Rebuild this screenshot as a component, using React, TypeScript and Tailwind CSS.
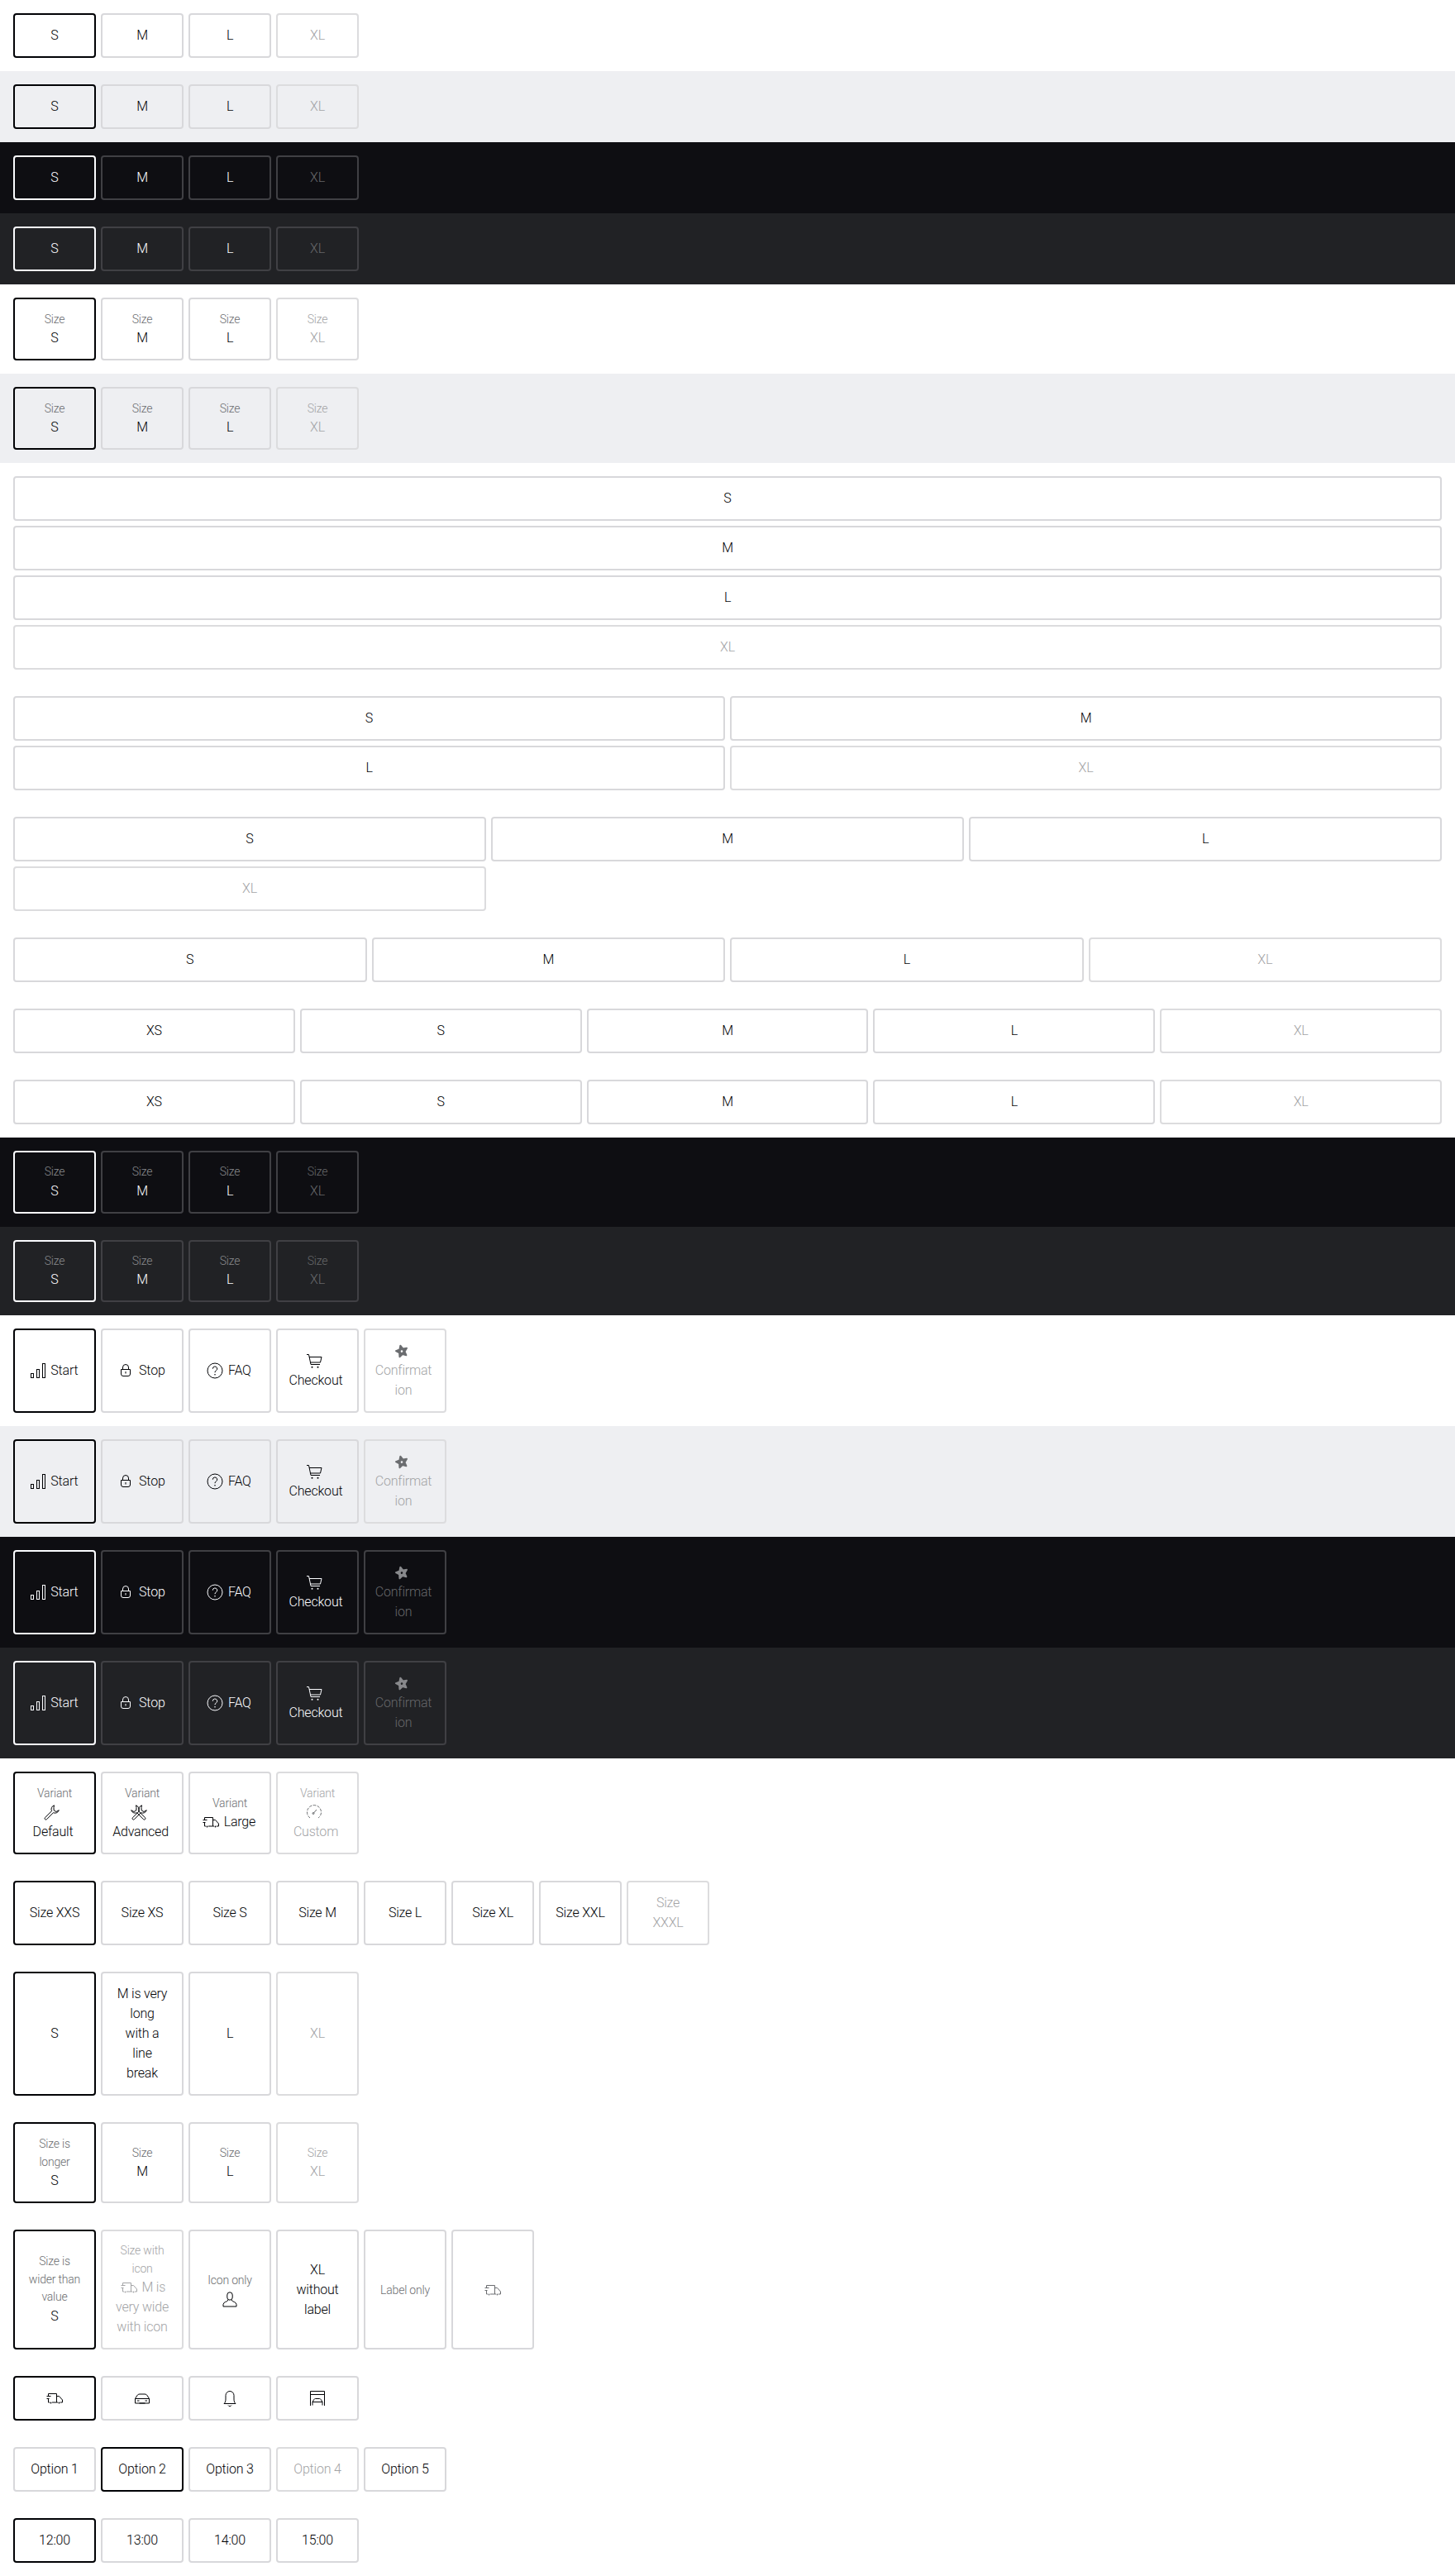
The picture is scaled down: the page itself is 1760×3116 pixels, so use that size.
import React from 'react';

type Theme = 'light' | 'surface' | 'dark' | 'darkSurface';

const sectionBg: Record<Theme, string> = {
  light: 'bg-white',
  surface: 'bg-[#eeeff2]',
  dark: 'bg-[#0e0e12]',
  darkSurface: 'bg-[#212225]',
};

const isDark = (t: Theme) => t === 'dark' || t === 'darkSurface';

const Svg: React.FC<{ children: React.ReactNode; className?: string }> = ({ children, className }) => (
  <svg viewBox="0 0 24 24" fill="none" stroke="currentColor" strokeWidth={1} className={`inline-block w-6 h-6 align-top ${className ?? ''}`}>
    {children}
  </svg>
);

const BarsIcon = () => (
  <Svg>
    <rect x="3.5" y="15.5" width="3" height="5" />
    <rect x="10.5" y="10.5" width="3" height="10" />
    <rect x="17.5" y="3.5" width="3" height="17" />
  </Svg>
);
const LockIcon = () => (
  <Svg>
    <path d="M6.5 10.5h11v5.5a2.5 2.5 0 0 1-2.500 2.500h-6a2.500 2.500 0 0 1-2.500-2.500z" />
    <path d="M8.500 10.500V8a3.500 3.500 0 0 1 7 0v2.500M12 13v2.500" />
  </Svg>
);
const QuestionIcon = () => (
  <Svg>
    <circle cx="12" cy="12" r="9" />
    <path d="M9.300 9.700a2.700 2.700 0 1 1 3.900 2.400c-.8.400-1.200 1-1.200 2.100" />
    <circle cx="12" cy="16.800" r=".8" fill="currentColor" stroke="none" />
  </Svg>
);
const CartIcon = () => (
  <Svg>
    <path d="M3 4.500h2.500L8 16.500h11" />
    <path d="M6 7.500h15l-1.500 6.500H7.500" />
    <circle cx="9.500" cy="19.800" r="1" fill="currentColor" stroke="none" />
    <circle cx="16.500" cy="19.800" r="1" fill="currentColor" stroke="none" />
  </Svg>
);
const StarIcon = () => (
  <Svg>
    <g transform="rotate(-14 12 12.500)">
      <path
        fillRule="evenodd"
        fill="currentColor"
        strokeWidth={2}
        strokeLinejoin="round"
        d="M12 5.500l2 4.300 4.700.6-3.400 3.300.8 4.700-4.100-2.300-4.100 2.300.8-4.700-3.400-3.300 4.700-.6zM12 10.300a2.300 2.300 0 1 0 0 4.600 2.300 2.300 0 0 0 0-4.600z"
      />
    </g>
  </Svg>
);
const wrenchPath =
  'M15.500 3.800a5 5 0 0 0-3 6.900l-8 8a1.400 1.400 0 0 0 2 2l8-8a5 5 0 0 0 6.800-3l-3.300 1.800-2.800-1.600-.2-3.200z';
const WrenchIcon = () => (
  <Svg>
    <path d={wrenchPath} />
  </Svg>
);
const ToolsIcon = () => (
  <Svg>
    <path d={wrenchPath} />
    <path d={wrenchPath} transform="matrix(-1 0 0 1 24 0)" />
  </Svg>
);
const TruckIcon = () => (
  <Svg>
    <path d="M4.500 9V6.500h10v10.500H9M4.500 13v4H6" />
    <path d="M2.500 9.500h5M2.500 12.500h3" />
    <path d="M14.500 9.500h3l4 4.500v3H19M14.500 17H16" />
    <circle cx="7.500" cy="17.500" r=".9" fill="currentColor" stroke="none" />
    <circle cx="17.500" cy="17.500" r=".9" fill="currentColor" stroke="none" />
  </Svg>
);
const GaugeIcon = () => (
  <Svg>
    <path d="M7 19a8.500 8.500 0 1 1 10 0" strokeDasharray="3.500 1.500" />
    <path d="M11 13.500l4-4.500" />
    <circle cx="11" cy="13.500" r="1" />
  </Svg>
);
const UserIcon = () => (
  <Svg>
    <path d="M8.800 7a3.200 3.200 0 0 1 6.400 0v3a3.200 3.200 0 0 1-6.400 0z" />
    <path d="M9.500 13v1c0 .8-5.500 1.500-5.500 4.500v2.500h16v-2.500c0-3-5.500-3.700-5.500-4.500v-1" />
  </Svg>
);
const CarIcon = () => (
  <Svg>
    <path d="M3.500 12.500l2.300-3.700c.6-1 1.700-1.800 3.200-1.800h6c1.500 0 2.600.8 3.200 1.800l2.300 3.700V18h-17z" />
    <path d="M3.500 12.500h17M6 15h2.500M15.500 15H18M8.500 18h7" />
  </Svg>
);
const BellIcon = () => (
  <Svg>
    <path d="M5 18.500h14c-1.500-1.500-2-3-2-5.500V8.500a5 5 0 0 0-10 0V13c0 2.500-.5 4-2 5.500z" />
    <path d="M10 20.500a2.300 2.300 0 0 0 4 0" />
  </Svg>
);
const GarageIcon = () => (
  <Svg>
    <path d="M3.500 21V3.500h17V21M3.500 7.500h17" />
    <path d="M6 20.500v-4l1.800-3c.4-.6 1-1 1.700-1h5c.7 0 1.300.4 1.700 1l1.800 3v4M6 16.500h12" />
  </Svg>
);

interface CardProps {
  theme?: Theme;
  label?: React.ReactNode;
  value?: React.ReactNode;
  selected?: boolean;
  disabled?: boolean;
  className?: string;
  labelClass?: string;
}

const Card: React.FC<CardProps> = ({ theme = 'light', label, value, selected, disabled, className, labelClass }) => {
  const dark = isDark(theme);
  const border = selected
    ? dark
      ? 'border-[#fbfcff]'
      : 'border-[#010205]'
    : dark
      ? 'border-[#404044]'
      : disabled
        ? 'border-[#dcdcde]'
        : 'border-[#d8d8db]';
  const valueColor = disabled ? (dark ? 'text-[#66676a]' : 'text-[#a3a4a6]') : dark ? 'text-[#fbfcff]' : 'text-[#010205]';
  const labelColor = disabled ? (dark ? 'text-[#66676a]' : 'text-[#a3a4a6]') : dark ? 'text-[#88898c]' : 'text-[#6b6d70]';
  return (
    <div
      className={`flex flex-col items-center justify-center border-2 rounded px-[13px] py-[13px] text-center font-[350] tracking-[-0.2px] font-['Roboto',sans-serif] whitespace-pre-line ${border} ${className ?? 'w-[100px]'}`}
    >
      {label && <div className={`text-[14px] ${labelClass ?? 'leading-[22px]'} ${labelColor}`}>{label}</div>}
      {value && <div className={`text-base leading-6 ${valueColor}`}>{value}</div>}
    </div>
  );
};

// icon sitting next to the text on the same line
const Inline: React.FC<{ icon: React.ReactNode; text: string }> = ({ icon, text }) => (
  <span className="inline-block pr-1 whitespace-nowrap">
    {icon} {text}
  </span>
);

// icon on its own line, text below
const Stacked: React.FC<{ icon: React.ReactNode; text: string; iconClass?: string }> = ({ icon, text, iconClass }) => (
  <>
    <span className={`flex justify-center pr-2 ${iconClass ?? ''}`}>{icon}</span>
    <span className="block pr-1">{text}</span>
  </>
);

const SIZES = ['S', 'M', 'L', 'XL'];

const Section: React.FC<{ theme: Theme; children: React.ReactNode }> = ({ theme, children }) => (
  <div className={`p-4 ${sectionBg[theme]}`}>
    <div className="flex gap-[6px] items-stretch">{children}</div>
  </div>
);

const SizeRow: React.FC<{ theme: Theme; withLabel?: boolean; labelClass?: string }> = ({ theme, withLabel, labelClass }) => (
  <Section theme={theme}>
    {SIZES.map((s, i) => (
      <Card key={s} theme={theme} value={s} label={withLabel ? 'Size' : undefined} selected={i === 0} disabled={s === 'XL'} labelClass={labelClass} />
    ))}
  </Section>
);

const IconRow: React.FC<{ theme: Theme }> = ({ theme }) => {
  const star = isDark(theme) ? 'text-[#88898c]' : 'text-[#6b6d70]';
  return (
    <Section theme={theme}>
      <Card theme={theme} selected value={<Inline icon={<BarsIcon />} text="Start" />} />
      <Card theme={theme} value={<Inline icon={<LockIcon />} text="Stop" />} />
      <Card theme={theme} value={<Inline icon={<QuestionIcon />} text="FAQ" />} />
      <Card theme={theme} value={<Stacked icon={<CartIcon />} text="Checkout" />} />
      <Card theme={theme} disabled value={<Stacked icon={<StarIcon />} iconClass={star} text={'Confirmat\nion'} />} />
    </Section>
  );
};

const GridRow: React.FC<{ cols: string; items: string[] }> = ({ cols, items }) => (
  <div className={`grid gap-[6px] ${cols}`}>
    {items.map((s) => (
      <Card key={s} value={s} selected={false} disabled={s === 'XL'} className="w-full" />
    ))}
  </div>
);

export default function App() {
  return (
    <div className="w-[1760px] bg-white">
      <SizeRow theme="light" />
      <SizeRow theme="surface" />
      <SizeRow theme="dark" />
      <SizeRow theme="darkSurface" />
      <SizeRow theme="light" withLabel />
      <SizeRow theme="surface" withLabel />

      <div className="flex flex-col gap-8 p-4">
        <GridRow cols="grid-cols-1" items={SIZES} />
        <GridRow cols="grid-cols-2" items={SIZES} />
        <GridRow cols="grid-cols-3" items={SIZES} />
        <GridRow cols="grid-cols-4" items={SIZES} />
        <GridRow cols="grid-cols-5" items={['XS', ...SIZES]} />
        <GridRow cols="grid-cols-5" items={['XS', ...SIZES]} />
      </div>

      <SizeRow theme="dark" withLabel labelClass="leading-[21.5px]" />
      <SizeRow theme="darkSurface" withLabel labelClass="leading-[21.5px]" />

      <IconRow theme="light" />
      <IconRow theme="surface" />
      <IconRow theme="dark" />
      <IconRow theme="darkSurface" />

      <div className="flex flex-col gap-8 p-4">
        <div className="flex gap-[6px]">
          <Card selected label="Variant" value={<Stacked icon={<WrenchIcon />} text="Default" />} />
          <Card label="Variant" value={<Stacked icon={<ToolsIcon />} text="Advanced" />} />
          <Card label="Variant" value={<Inline icon={<TruckIcon />} text="Large" />} />
          <Card disabled label="Variant" value={<Stacked icon={<GaugeIcon />} iconClass="text-[#6b6d70]" text="Custom" />} />
        </div>

        <div className="flex gap-[6px]">
          <Card selected value="Size XXS" />
          <Card value="Size XS" />
          <Card value="Size S" />
          <Card value="Size M" />
          <Card value="Size L" />
          <Card value="Size XL" />
          <Card value="Size XXL" />
          <Card disabled value={'Size\nXXXL'} />
        </div>

        <div className="flex gap-[6px]">
          <Card selected value="S" />
          <Card value={'M is very\nlong\nwith a\nline\nbreak'} />
          <Card value="L" />
          <Card disabled value="XL" />
        </div>

        <div className="flex gap-[6px]">
          <Card selected label={'Size is\nlonger'} value="S" />
          <Card label="Size" value="M" />
          <Card label="Size" value="L" />
          <Card disabled label="Size" value="XL" />
        </div>

        <div className="flex gap-[6px]">
          <Card selected label={'Size is\nwider than\nvalue'} value="S" labelClass="leading-[21.5px]" />
          <Card
            disabled
            label={'Size with\nicon'}
            labelClass="leading-[21.5px]"
            value={
              <span className="inline-block">
                <TruckIcon /> {'M is\nvery wide\nwith icon'}
              </span>
            }
          />
          <Card label="Icon only" value={<span className="flex justify-center"><UserIcon /></span>} />
          <Card value={'XL\nwithout\nlabel'} />
          <Card label="Label only" />
          <Card label={<span className="flex justify-center"><TruckIcon /></span>} />
        </div>

        <div className="flex gap-[6px]">
          <Card selected value={<span className="flex justify-center"><TruckIcon /></span>} />
          <Card value={<span className="flex justify-center"><CarIcon /></span>} />
          <Card value={<span className="flex justify-center"><BellIcon /></span>} />
          <Card value={<span className="flex justify-center"><GarageIcon /></span>} />
        </div>

        <div className="flex gap-[6px]">
          <Card value="Option 1" />
          <Card selected value="Option 2" />
          <Card value="Option 3" />
          <Card disabled value="Option 4" />
          <Card value="Option 5" />
        </div>

        <div className="flex gap-[6px]">
          <Card selected value="12:00" />
          <Card value="13:00" />
          <Card value="14:00" />
          <Card value="15:00" />
        </div>
      </div>
    </div>
  );
}
